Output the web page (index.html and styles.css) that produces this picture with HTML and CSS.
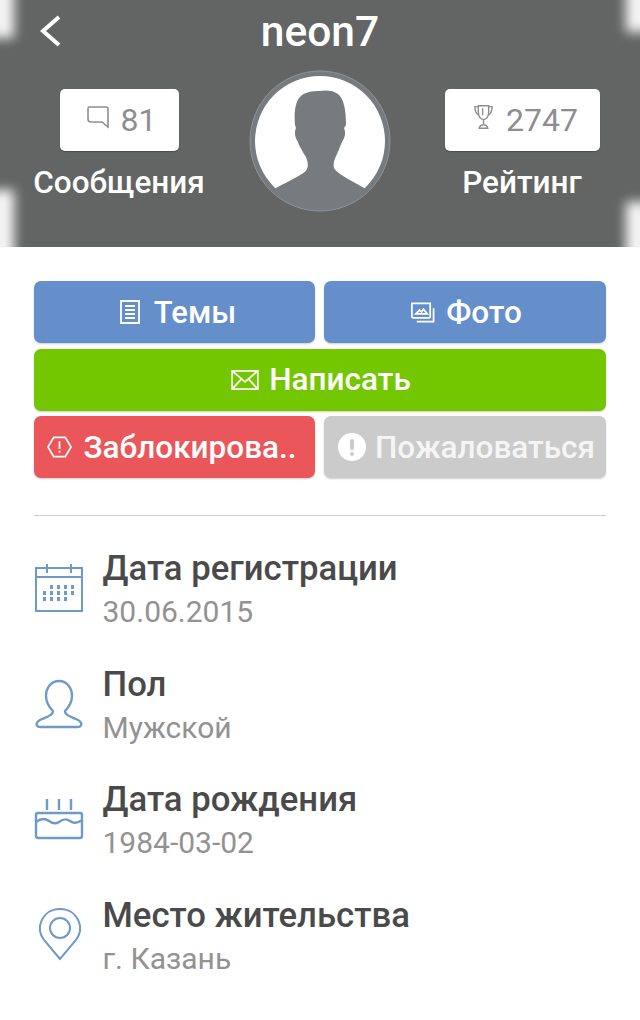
FILE: index.html
```html
<!DOCTYPE html>
<html lang="ru">
<head>
  <meta charset="UTF-8" />
  <title>neon7</title>
  <link rel="stylesheet" href="styles.css">
</head>
<body>
  <div class="profile-head">
    <div class="head-side-marks">
      <span class="mark mark-top-left"></span>
      <span class="mark mark-bottom-left"></span>
      <span class="mark mark-top-right"></span>
      <span class="mark mark-bottom-right"></span>
    </div>
    <div class="title-row">
      <svg class="back-icon" viewBox="0 0 24 34"><path d="M21 3 L5 17 L21 31" /></svg>
      <div class="nick">neon7</div>
    </div>
    <div class="stats">
      <div class="stat stat-left">
        <div class="stat-box box-messages">
          <svg class="stat-icon" viewBox="0 0 24 24"><path d="M3 2 H20 Q22 2 22 4 V22 L16 17 H5 Q2 17 2 14 V4 Q2 2 3 2 Z" /></svg>
          <span>81</span>
        </div>
        <div class="stat-label">Сообщения</div>
      </div>
      <div class="avatar">
        <svg viewBox="0 0 142 142">
          <circle class="avatar-ring" cx="71" cy="71" r="70" />
          <circle cx="71" cy="71" r="65" fill="#fff" />
          <path class="avatar-man" d="M71 21 C76 20 84 20 89 24 C95 29 97 40 97 55 L95 58 C97 62 96 68 93 72 C91 76 90 80 88 84 C85 90 84 94 85 98 C88 103 94 106 117 119 A66.500 66.500 0 0 1 25 119 C50 106 56 103 58 99 C60 94 58 88 55 84 C53 80 50 76 49 72 C46 68 45 62 47 58 L46 55 C45 42 46 33 51 27 C55 22 63 21 71 21 Z" />
        </svg>
      </div>
      <div class="stat stat-right">
        <div class="stat-box box-rating">
          <svg class="stat-icon trophy" viewBox="0 0 24 30">
            <path d="M6 2 H18 V9 Q18 17 12 18 Q6 17 6 9 Z M11 5 V13" />
            <path d="M6 3 H2 Q2 11 7 13 M18 3 H22 Q22 11 17 13 M12 18 V24 M7 28 Q8 24 12 24 Q16 24 17 28 Z" />
          </svg>
          <span>2747</span>
        </div>
        <div class="stat-label">Рейтинг</div>
      </div>
    </div>
  </div>

  <div class="content">
    <div class="buttons">
      <div class="btn btn-blue btn-topics">
        <svg class="btn-icon" viewBox="0 0 22 26"><path d="M2 2 H20 V24 H2 Z M6 7 H16 M6 11 H16 M6 15 H16 M6 19 H16" /></svg>
        Темы
      </div>
      <div class="btn btn-blue btn-photos">
        <svg class="btn-icon photo" viewBox="0 0 26 22"><path d="M2 2 H21 V16 Q21 17 20 17 H3 Q2 17 2 16 Z M24.500 7 V21 H7 M6 13 L10 9 L12 11 L14 8 L18 13 Z" /></svg>
        Фото
      </div>
      <div class="btn btn-green btn-wide">
        <svg class="btn-icon mail" viewBox="0 0 32 24"><path d="M2 2 H30 V22 H2 Z M2 2 L16 14 L30 2 M2 22 L12 11 M30 22 L20 11" /></svg>
        Написать
      </div>
      <div class="btn btn-red">
        <svg class="btn-icon hex" viewBox="0 0 26 24"><path d="M7 2 H19 L25 12 L19 22 H7 L1 12 Z M13 6 V14 M13 16 V18" /></svg>
        Заблокирова..
      </div>
      <div class="btn btn-gray">
        <svg class="btn-icon alert" viewBox="0 0 28 28"><circle cx="14" cy="14" r="14" /><rect x="12" y="6" width="4" height="11" rx="2" /><circle cx="14" cy="21" r="2" /></svg>
        Пожаловаться
      </div>
    </div>

    <div class="divider"></div>

    <div class="info-list">
      <div class="info-row">
        <svg class="info-icon calendar" viewBox="0 0 50 50">
          <path d="M2 5 H48 V48 H2 Z M2 14 H48 M13 1 V10 M37 1 V10" />
          <path class="dots" d="M16 24 h3 M23 24 h3 M30 24 h3 M37 24 h3 M9 30 h3 M16 30 h3 M23 30 h3 M30 30 h3 M37 30 h3 M9 36 h3 M16 36 h3 M23 36 h3 M30 36 h3" />
        </svg>
        <div class="info-text">
          <div class="info-title">Дата регистрации</div>
          <div class="info-value">30.06.2015</div>
        </div>
      </div>
      <div class="info-row">
        <svg class="info-icon icon-thick" viewBox="0 0 50 50">
          <path d="M25 2 C17 2 12 9 12 17 C12 24 16 29 19 32 C19 36 15 37 8 40 C1 43 1 48 7 48 H43 C49 48 49 43 42 40 C35 37 31 36 31 32 C34 29 38 24 38 17 C38 9 33 2 25 2 Z" />
        </svg>
        <div class="info-text">
          <div class="info-title">Пол</div>
          <div class="info-value">Мужской</div>
        </div>
      </div>
      <div class="info-row">
        <svg class="info-icon icon-thick" viewBox="0 0 50 50">
          <path d="M4 18 H46 Q48 18 48 20 V41 Q48 43 46 43 H4 Q2 43 2 41 V20 Q2 18 4 18 Z M2 27 C7 23 11 23 15 26 C19 29 22 29 25 27 C29 24 32 23 36 26 C40 29 44 28 48 25 M13 4 V15 M25 4 V15 M37 4 V15" />
        </svg>
        <div class="info-text">
          <div class="info-title">Дата рождения</div>
          <div class="info-value">1984-03-02</div>
        </div>
      </div>
      <div class="info-row">
        <svg class="info-icon pin" viewBox="0 0 50 54">
          <path d="M25 52 L9 33 C4 26 4 20 6 15 C9 7 16 2 25 2 C34 2 41 7 44 15 C46 20 46 26 41 33 Z" />
          <circle cx="25" cy="21" r="10" />
        </svg>
        <div class="info-text">
          <div class="info-title">Место жительства</div>
          <div class="info-value">г. Казань</div>
        </div>
      </div>
    </div>
  </div>
</body>
</html>
```

FILE: styles.css
```css
* {
  box-sizing: border-box;
}

body {
  margin: 0;
  font-family: Roboto, "Liberation Sans", sans-serif;
  background: #fff;
}

.profile-head {
  height: 247px;
  background: #636464;
  position: relative;
  overflow: hidden;
  color: #fff;
}

.mark {
  position: absolute;
  width: 24px;
  background: #f6f6f6;
  filter: blur(6px);
}

.mark-top-left { left: -10px; top: -14px; height: 52px; }
.mark-bottom-left { left: -10px; top: 190px; height: 76px; }
.mark-top-right { right: -10px; top: -14px; height: 46px; }
.mark-bottom-right { right: -10px; top: 202px; height: 60px; }

.title-row {
  height: 64px;
  position: relative;
  display: flex;
  justify-content: center;
  align-items: center;
}

.back-icon {
  position: absolute;
  left: 38px;
  top: 14px;
  width: 24px;
  height: 34px;
  fill: none;
  stroke: #fff;
  stroke-width: 4;
}

.nick {
  font-size: 42.5px;
  font-weight: 500;
  line-height: 64px;
}

.stats {
  display: flex;
  align-items: flex-start;
  height: 150px;
  margin-top: 6px;
}

.stat {
  display: flex;
  flex-direction: column;
  align-items: center;
  padding-top: 19px;
  flex-shrink: 0;
}

.stat-left { width: 238px; }
.stat-right { width: 262px; }

.stat-box {
  height: 62px;
  background: #fff;
  border-radius: 5px;
  display: flex;
  align-items: center;
  justify-content: center;
  gap: 11px;
  color: #8e8e8e;
  font-size: 32px;
  box-shadow: 0 1px 1px rgba(0, 0, 0, 0.25);
}

.box-messages { width: 119px; padding-left: 4px; }
.box-rating { width: 155px; padding-left: 7px; gap: 12px; }

.stat-icon {
  width: 24px;
  height: 24px;
  fill: none;
  stroke: #8e8e8e;
  stroke-width: 1.6;
  margin-top: -6px;
}

.trophy {
  width: 21px;
  height: 26px;
}

.stat-label {
  font-size: 31.5px;
  font-weight: 500;
  line-height: 36px;
  margin-top: 14px;
}

.avatar {
  width: 142px;
  height: 142px;
  margin-left: 11px;
  flex-shrink: 0;
}

.avatar svg {
  display: block;
  width: 142px;
  height: 142px;
}

.avatar-ring {
  fill: #757b7f;
  stroke: #8d9396;
  stroke-width: 1;
}

.avatar-man {
  fill: #757b7f;
}

.content {
  padding: 34px 34px 0;
}

.buttons {
  display: grid;
  grid-template-columns: 281px 282px;
  column-gap: 9px;
  row-gap: 5.5px;
}

.btn {
  height: 62px;
  border-radius: 7px;
  color: #fff;
  font-size: 31.5px;
  font-weight: 500;
  display: flex;
  align-items: center;
  justify-content: center;
  gap: 11px;
  white-space: nowrap;
  box-shadow: 0 1px 2px rgba(0, 0, 0, 0.2);
}

.btn-wide { grid-column: 1 / 3; gap: 9px; padding-left: 1px; }
.btn-topics { gap: 13px; font-size: 31px; padding-left: 6px; }
.btn-photos { padding-left: 2px; }
.btn-blue { background: #648fcb; }
.btn-green { background: #72c700; }
.btn-red { background: #ea5659; padding-right: 5px; }
.btn-gray { background: #cbcbcb; color: #f5f5f5; gap: 9px; padding-left: 3px; }

.btn-icon {
  width: 22px;
  height: 26px;
  fill: none;
  stroke: #fff;
  stroke-width: 1.8;
  flex-shrink: 0;
}

.photo { width: 25px; height: 22px; }
.mail { width: 30px; height: 22px; }
.hex { width: 25px; height: 24px; }

.alert {
  width: 28px;
  height: 28px;
  stroke: none;
  fill: #fff;
}

.alert rect,
.alert circle + rect + circle {
  fill: #cbcbcb;
}

.divider {
  height: 1px;
  background: #cdcdcd;
  margin-top: 37px;
}

.info-list {
  margin-top: 29px;
  display: flex;
  flex-direction: column;
  gap: 28.7px;
}

.info-row {
  display: flex;
  align-items: center;
  height: 87px;
}

.info-icon {
  width: 50px;
  height: 50px;
  margin-right: 18.5px;
  fill: none;
  stroke: #6d9ac6;
  stroke-width: 2;
  flex-shrink: 0;
}

.calendar {
  margin-top: -2px;
}

.icon-thick {
  stroke-width: 2.4;
}

.pin {
  height: 54px;
  margin-top: -4px;
  margin-left: 1px;
  margin-right: 17.5px;
}

.dots {
  stroke-width: 4;
}

.info-title {
  font-size: 34.7px;
  font-weight: 500;
  line-height: 46px;
  color: #4a4a4a;
}

.info-value {
  font-size: 30px;
  line-height: 41px;
  color: #929292;
}
```
